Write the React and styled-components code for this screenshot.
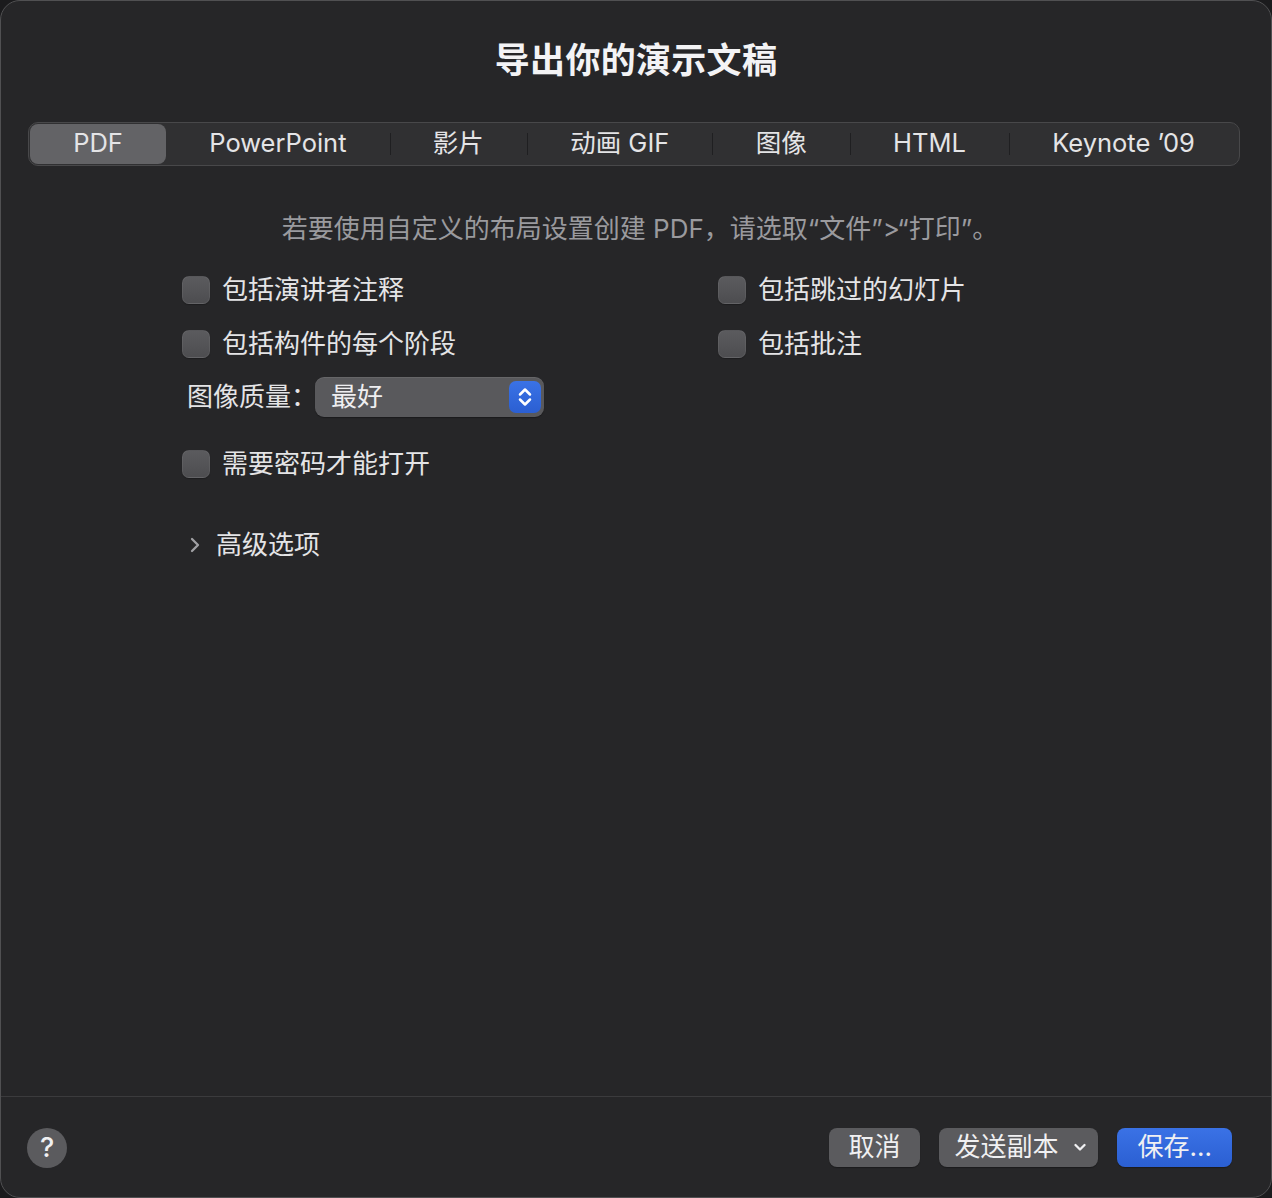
import styled, { createGlobalStyle } from "styled-components";

const GlobalStyle = createGlobalStyle`
  html, body {
    margin: 0;
    padding: 0;
    background: #1b1b1d;
  }
  body {
    font-family: Inter, "Noto Sans CJK SC", sans-serif;
    line-height: 1.25;
    -webkit-font-smoothing: antialiased;
  }
  * { box-sizing: border-box; }
`;

const Window = styled.div`
  height: 1198px;
  width: 1272px;
  background: #262628;
  border: 1px solid #505052;
  border-radius: 20px;
  display: flex;
  flex-direction: column;
  overflow: hidden;
  color: #e6e6e8;
`;

const Title = styled.h1`
  margin: 40px 0 0;
  font-size: 35px;
  line-height: 38px;
  font-weight: 700;
  text-align: center;
  color: #f3f3f5;
  letter-spacing: 0.3px;
`;

const Segmented = styled.div`
  margin: 43px 31px 0 27px;
  height: 44px;
  display: flex;
  background: #303032;
  border: 1px solid #48484a;
  border-radius: 10px;
  padding: 1px;
`;

const Segment = styled.div`
  flex: 1 1 auto;
  position: relative;
  display: flex;
  align-items: center;
  justify-content: center;
  padding: 0 39px 2px;
  font-size: 25.5px;
  color: #e4e4e6;
  border-radius: 8px;
  background: ${(p) => (p.$active ? "#636366" : "transparent")};
  white-space: nowrap;

  &::before {
    content: "";
    position: absolute;
    left: 0;
    top: 9px;
    bottom: 9px;
    width: 1px;
    background: #1f1f21;
    display: ${(p) => (p.$sep ? "block" : "none")};
  }
`;

const Hint = styled.p`
  margin: 47px 0 0;
  padding-left: 8px;
  text-align: center;
  font-size: 26px;
  line-height: 32px;
  color: #9a9a9e;
`;

const Options = styled.div`
  margin-top: 31px;
  padding-left: 181px;
  display: grid;
  grid-template-columns: 536px 1fr;
  row-gap: 26px;
`;

const CheckRow = styled.label`
  display: flex;
  align-items: center;
  gap: 12px;
  height: 28px;
  font-size: 26px;
  color: #e4e4e6;
`;

const Box = styled.span`
  width: 28px;
  height: 28px;
  border-radius: 7px;
  background: linear-gradient(#5b5b5e, #4d4d50);
  border: 1px solid rgba(255, 255, 255, 0.06);
  box-shadow: 0 1px 1px rgba(0, 0, 0, 0.25);
  flex: none;
`;

const Section = styled.div`
  padding-left: 181px;
  margin-top: ${(p) => p.$top}px;
`;

const QualityRow = styled.div`
  display: flex;
  align-items: center;
  height: 40px;
  padding-left: 5px;
`;

const FieldLabel = styled.span`
  font-size: 26px;
  color: #e4e4e6;
  font-feature-settings: "halt";
  margin-right: 11px;
`;

const Select = styled.div`
  width: 229px;
  height: 40px;
  border-radius: 9px;
  background: #59595c;
  box-shadow: 0 1px 1px rgba(0, 0, 0, 0.3), inset 0 1px 0 rgba(255, 255, 255, 0.08);
  display: flex;
  align-items: center;
  justify-content: space-between;
  padding: 0 3px 0 16px;
  font-size: 26px;
  color: #eeeef0;
`;

const Stepper = styled.span`
  width: 32px;
  height: 32px;
  border-radius: 7px;
  background: linear-gradient(#3a72e6, #2b5fd2);
  display: flex;
  align-items: center;
  justify-content: center;
`;

const Disclosure = styled.div`
  display: flex;
  align-items: center;
  gap: 16px;
  height: 32px;
  padding-left: 8px;
  font-size: 26px;
  color: #e4e4e6;
`;

const Spacer = styled.div`
  flex: 1;
`;

const Footer = styled.div`
  border-top: 1px solid #3b3b3d;
  height: 101px;
  display: flex;
  align-items: center;
  padding: 0 39px 0 26px;
`;

const HelpButton = styled.span`
  width: 40px;
  height: 40px;
  border-radius: 50%;
  background: #5b5b5e;
  display: flex;
  align-items: center;
  justify-content: center;
  font-size: 27px;
  font-weight: 500;
  color: #f0f0f2;
  margin-top: 2px;
`;

const Actions = styled.div`
  margin-left: auto;
  display: flex;
  gap: 19px;
  margin-top: 1px;
`;

const Button = styled.span`
  height: 39px;
  border-radius: 8px;
  padding: 0 ${(p) => p.$pr ?? 20}px 0 ${(p) => p.$pl ?? 20}px;
  display: flex;
  align-items: center;
  gap: 15px;
  font-size: 26px;
  color: #f0f0f2;
  background: ${(p) => (p.$primary ? "linear-gradient(#3a72e6, #2b5fd2)" : "#5b5b5e")};
  box-shadow: 0 1px 1px rgba(0, 0, 0, 0.3);
`;

const tabs = ["PDF", "PowerPoint", "影片", "动画 GIF", "图像", "HTML", "Keynote ’09"];
const active = 0;

const Check = ({ children }) => (
  <CheckRow>
    <Box />
    {children}
  </CheckRow>
);

export default function App() {
  return (
    <>
      <GlobalStyle />
      <Window>
        <Title>导出你的演示文稿</Title>
        <Segmented>
          {tabs.map((t, i) => (
            <Segment
              key={t}
              $active={i === active}
              $sep={i > 0 && i !== active && i - 1 !== active}
            >
              {t}
            </Segment>
          ))}
        </Segmented>
        <Hint>若要使用自定义的布局设置创建 PDF，请选取“文件”&gt;“打印”。</Hint>
        <Options>
          <Check>包括演讲者注释</Check>
          <Check>包括跳过的幻灯片</Check>
          <Check>包括构件的每个阶段</Check>
          <Check>包括批注</Check>
        </Options>
        <Section $top={19}>
          <QualityRow>
            <FieldLabel>图像质量：</FieldLabel>
            <Select>
              最好
              <Stepper>
                <svg width="16" height="24" viewBox="0 0 16 24" fill="none" stroke="#fff" strokeWidth="2.5" strokeLinecap="round" strokeLinejoin="round">
                  <path d="M3 9.5 L8 4.5 L13 9.5" />
                  <path d="M3 14.5 L8 19.5 L13 14.5" />
                </svg>
              </Stepper>
            </Select>
          </QualityRow>
        </Section>
        <Section $top={33}>
          <Check>需要密码才能打开</Check>
        </Section>
        <Section $top={51}>
          <Disclosure>
            <svg width="10" height="16" viewBox="0 0 10 16" fill="none" stroke="#a0a0a4" strokeWidth="2.3" strokeLinecap="round" strokeLinejoin="round">
              <path d="M2 2 L8 8 L2 14" />
            </svg>
            高级选项
          </Disclosure>
        </Section>
        <Spacer />
        <Footer>
          <HelpButton>?</HelpButton>
          <Actions>
            <Button $pl={19} $pr={19}>取消</Button>
            <Button $pl={16} $pr={12}>
              发送副本
              <svg width="12" height="9" viewBox="0 0 12 9" fill="none" stroke="#f0f0f2" strokeWidth="2.3" strokeLinecap="round" strokeLinejoin="round">
                <path d="M1.5 2 L6 6.5 L10.5 2" />
              </svg>
            </Button>
            <Button $primary $pl={21} $pr={20}>保存…</Button>
          </Actions>
        </Footer>
      </Window>
    </>
  );
}
